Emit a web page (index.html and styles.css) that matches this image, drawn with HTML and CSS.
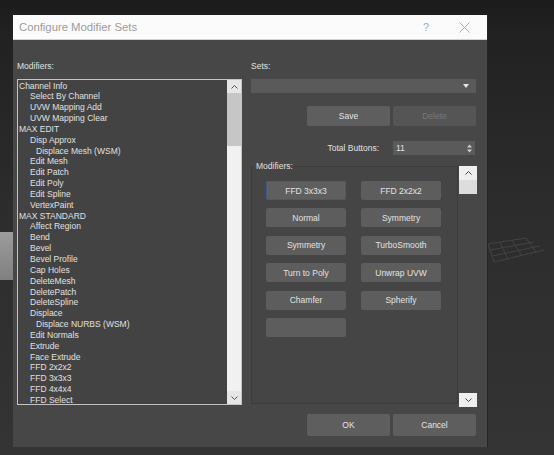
FILE: index.html
```html
<!DOCTYPE html>
<html>
<head>
<meta charset="utf-8">
<link rel="stylesheet" href="styles.css">
</head>
<body>
<div class="desk">
  <div class="deco-box"></div>
  <svg class="deco-grid" width="60" height="34" viewBox="0 0 60 34">
    <g stroke="#434343" stroke-width="1" fill="none">
      <path d="M2 10 L40 4 M4 16 L48 8 M6 22 L54 12 M8 28 L58 16"/>
      <path d="M2 10 L8 28 M14 8 L22 26 M26 6 L36 22 M40 4 L50 18"/>
    </g>
  </svg>
  <div class="dialog">
    <div class="titlebar">
      <span class="title">Configure Modifier Sets</span>
      <span class="help">?</span>
      <svg class="close" width="11" height="11" viewBox="0 0 11 11"><path d="M0.5 0.5 L10.5 10.5 M10.5 0.5 L0.5 10.5" stroke="#a8a8a8" stroke-width="1" fill="none"/></svg>
    </div>
    <div class="body">
      <div class="col-left">
        <div class="label">Modifiers:</div>
        <div class="list">
          <div class="items">
            <div class="cat">Channel Info</div>
            <div class="it">Select By Channel</div>
            <div class="it">UVW Mapping Add</div>
            <div class="it">UVW Mapping Clear</div>
            <div class="cat">MAX EDIT</div>
            <div class="it">Disp Approx</div>
            <div class="sub">Displace Mesh (WSM)</div>
            <div class="it">Edit Mesh</div>
            <div class="it">Edit Patch</div>
            <div class="it">Edit Poly</div>
            <div class="it">Edit Spline</div>
            <div class="it">VertexPaint</div>
            <div class="cat">MAX STANDARD</div>
            <div class="it">Affect Region</div>
            <div class="it">Bend</div>
            <div class="it">Bevel</div>
            <div class="it">Bevel Profile</div>
            <div class="it">Cap Holes</div>
            <div class="it">DeleteMesh</div>
            <div class="it">DeletePatch</div>
            <div class="it">DeleteSpline</div>
            <div class="it">Displace</div>
            <div class="sub">Displace NURBS (WSM)</div>
            <div class="it">Edit Normals</div>
            <div class="it">Extrude</div>
            <div class="it">Face Extrude</div>
            <div class="it">FFD 2x2x2</div>
            <div class="it">FFD 3x3x3</div>
            <div class="it">FFD 4x4x4</div>
            <div class="it">FFD Select</div>
          </div>
          <div class="vscroll">
            <div class="sarrow"><svg width="7" height="4" viewBox="0 0 7 4"><path d="M0.5 3.5 L3.5 0.5 L6.5 3.5" stroke="#555" fill="none"/></svg></div>
            <div class="sthumb"></div>
            <div class="strack"></div>
            <div class="sarrow"><svg width="7" height="4" viewBox="0 0 7 4"><path d="M0.5 0.5 L3.5 3.5 L6.5 0.5" stroke="#555" fill="none"/></svg></div>
          </div>
        </div>
      </div>
      <div class="col-right">
        <div class="label">Sets:</div>
        <div class="dropdown">
          <svg width="6" height="4" viewBox="0 0 6 4"><path d="M0 0 L6 0 L3 4 Z" fill="#e8e8e8"/></svg>
        </div>
        <div class="btnrow top">
          <div class="btn">Save</div>
          <div class="btn disabled">Delete</div>
        </div>
        <div class="totalrow">
          <span class="tlabel">Total Buttons:</span>
          <div class="spin">
            <span>11</span>
            <svg width="5" height="9" viewBox="0 0 5 9"><path d="M0 3.5 L2.5 0.5 L5 3.5 Z M0 5.5 L2.5 8.5 L5 5.5 Z" fill="#cfcfcf"/></svg>
          </div>
        </div>
        <div class="panel">
          <fieldset class="group">
            <legend>Modifiers:</legend>
            <div class="grid">
              <div class="mbtn focus">FFD 3x3x3</div>
              <div class="mbtn">FFD 2x2x2</div>
              <div class="mbtn">Normal</div>
              <div class="mbtn">Symmetry</div>
              <div class="mbtn">Symmetry</div>
              <div class="mbtn">TurboSmooth</div>
              <div class="mbtn">Turn to Poly</div>
              <div class="mbtn">Unwrap UVW</div>
              <div class="mbtn">Chamfer</div>
              <div class="mbtn">Spherify</div>
              <div class="mbtn"></div>
            </div>
          </fieldset>
          <div class="pscroll">
            <div class="parrow"><svg width="7" height="4" viewBox="0 0 7 4"><path d="M0.5 3.5 L3.5 0.5 L6.5 3.5" stroke="#444" fill="none"/></svg></div>
            <div class="pthumb"></div>
            <div class="ptrack"></div>
            <div class="parrow"><svg width="7" height="4" viewBox="0 0 7 4"><path d="M0.5 0.5 L3.5 3.5 L6.5 0.5" stroke="#444" fill="none"/></svg></div>
          </div>
        </div>
        <div class="btnrow bottom">
          <div class="btn big">OK</div>
          <div class="btn big">Cancel</div>
        </div>
      </div>
    </div>
  </div>
</div>
</body>
</html>
```

FILE: styles.css
```css
* { box-sizing: border-box; }
html, body { margin: 0; padding: 0; }
body {
  width: 554px;
  height: 455px;
  overflow: hidden;
  font-family: "Liberation Sans", Arial, sans-serif;
}
.desk {
  position: relative;
  width: 554px;
  height: 455px;
  padding: 15px 0 0 13px;
  background: linear-gradient(#1c1c1c 0px, #222 40px, #2c2c2c 200px, #343434 455px);
}
.deco-box {
  position: absolute;
  left: 0;
  top: 232px;
  width: 13px;
  height: 48px;
  background: linear-gradient(#9c9c9c, #808080);
}
.deco-grid {
  position: absolute;
  left: 486px;
  top: 234px;
}
.dialog {
  position: relative;
  z-index: 1;
  width: 474px;
  height: 432px;
  background: #474747;
  box-shadow: 1px 0 0 #262626;
}
.titlebar {
  height: 25px;
  background: #fbfbfb;
  border-bottom: 1px solid #d4d4d4;
  display: flex;
  align-items: center;
  padding-left: 6px;
}
.title {
  font-size: 11.3px;
  color: #9b9b9b;
}
.help {
  margin-left: auto;
  font-size: 11px;
  color: #aaaaaa;
  margin-right: 30px;
}
.close {
  margin-right: 17px;
}
.body {
  display: flex;
  gap: 9px;
  padding: 21px 0 0 4px;
  font-size: 8.5px;
  color: #e0e0e0;
}
.label {
  height: 11px;
  line-height: 11px;
  margin-bottom: 7px;
}
.col-left { width: 225px; }
.list {
  height: 326px;
  border: 1px solid #c4c4c4;
  background: #434343;
  display: flex;
}
.items {
  flex: 1;
  overflow: hidden;
  padding-top: 0.5px;
  line-height: 10.85px;
  white-space: nowrap;
}
.cat { padding-left: 1px; }
.it { padding-left: 12px; }
.sub { padding-left: 18px; }
.vscroll {
  width: 14px;
  display: flex;
  flex-direction: column;
  background: #f1f1f1;
}
.sarrow {
  height: 13px;
  display: flex;
  align-items: center;
  justify-content: center;
  background: #e6e6e6;
}
.sthumb {
  height: 53px;
  background: #c6c6c6;
}
.strack { flex: 1; }

.col-right {
  width: 226px;
  display: flex;
  flex-direction: column;
}
.dropdown {
  width: 225px;
  height: 14px;
  background: #5a5a5a;
  display: flex;
  align-items: center;
  justify-content: flex-end;
  padding-right: 7px;
}
.btnrow {
  display: flex;
  justify-content: flex-end;
  gap: 3px;
  padding-right: 1px;
}
.btnrow.top { margin-top: 13px; }
.btnrow.bottom { margin-top: 7px; }
.btn {
  width: 83px;
  height: 20px;
  background: #5e5e5e;
  border-radius: 2px;
  display: flex;
  align-items: center;
  justify-content: center;
  color: #e4e4e4;
}
.btn.big { height: 22px; }
.btn.disabled {
  background: #555555;
  color: #777777;
}
.totalrow {
  margin-top: 15px;
  height: 14px;
  display: flex;
  align-items: center;
  justify-content: flex-end;
  padding-right: 2px;
}
.tlabel { margin-right: 14px; }
.spin {
  width: 82px;
  height: 14px;
  background: #5a5a5a;
  display: flex;
  align-items: center;
  justify-content: space-between;
  padding: 0 3px 0 3px;
}
.panel {
  margin-top: 6px;
  display: flex;
  gap: 1px;
}
.group {
  width: 207px;
  height: 243px;
  margin: 0;
  padding: 9px 0 0 14px;
  border: 1px solid #3c3c3c;
  background: #454545;
  min-width: 0;
}
.group legend {
  margin-left: -12px;
  padding: 0 2px;
  height: 11px;
  line-height: 11px;
  font-size: 8.5px;
  color: #e0e0e0;
}
.grid {
  display: grid;
  grid-template-columns: 80px 80px;
  column-gap: 15px;
  row-gap: 8.4px;
}
.mbtn {
  height: 19px;
  background: #5d5d5d;
  border-radius: 2px;
  display: flex;
  align-items: center;
  justify-content: center;
  color: #e2e2e2;
}
.mbtn.focus {
  box-shadow: inset 0 0 0 1px #3d5c86;
  background: #5f5f5f;
}
.pscroll {
  margin-top: 5px;
  width: 18px;
  height: 241px;
  display: flex;
  flex-direction: column;
}
.parrow {
  height: 14px;
  background: #efefef;
  display: flex;
  align-items: center;
  justify-content: center;
}
.pthumb {
  height: 14px;
  background: #dddddd;
}
.ptrack { flex: 1; }
```
